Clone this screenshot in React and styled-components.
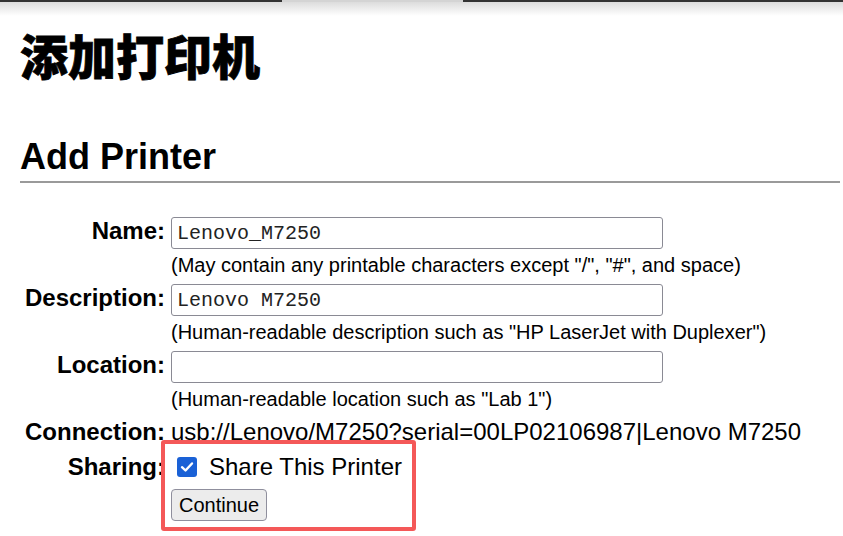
import React from "react";
import styled, { createGlobalStyle } from "styled-components";

const Global = createGlobalStyle`
  html, body { margin: 0; padding: 0; background: #fff; }
  body { font-family: "Liberation Sans", Arial, sans-serif; color: #000; }
`;

const Page = styled.div`
  position: relative;
  width: 843px;
  min-height: 536px;
`;

const TopBar = styled.div`
  display: flex;
  height: 2px;
`;

const Seg = styled.div`
  height: 2px;
  background: ${(p) => (p.$light ? "#d4d4d4" : "#333")};
  width: ${(p) => (p.$w ? `${p.$w}px` : "auto")};
  flex: ${(p) => (p.$w ? "none" : "1")};
`;

const Shade = styled.div`
  height: 14px;
  background: linear-gradient(#dcdcdc, #ffffff);
`;

const Content = styled.div`
  padding: 0 3px 0 20px;
`;

const Title = styled.h1`
  margin: 9px 0 0;
  font-family: "Noto Sans CJK SC", "Liberation Sans", sans-serif;
  font-size: 48px;
  font-weight: 900;
  line-height: 58px;
  -webkit-text-stroke: 0.8px #000;
`;

const SectionTitle = styled.h2`
  margin: 52px 0 0;
  padding-bottom: 3px;
  font-size: 36px;
  font-weight: 700;
  line-height: 43px;
  border-bottom: 2px solid #9a9a9a;
`;

const Form = styled.div`
  display: grid;
  grid-template-columns: 145px 1fr;
  column-gap: 6px;
  row-gap: 7px;
  margin-top: 34px;
`;

const Label = styled.div`
  font-size: 24px;
  font-weight: 700;
  line-height: 28px;
  text-align: right;
  white-space: nowrap;
`;

const Cell = styled.div`
  position: relative;
  display: flex;
  flex-direction: column;
  align-items: flex-start;
`;

const TextInput = styled.input`
  box-sizing: border-box;
  width: 492px;
  height: 32px;
  margin: 0;
  padding: 0 5px;
  border: 1px solid #8a8a94;
  border-radius: 3px;
  font-family: "Liberation Mono", "Courier New", monospace;
  font-size: 20px;
  color: #222;
  background: #fff;
  outline: none;
`;

const Help = styled.div`
  margin-top: 5px;
  font-size: 20px;
  line-height: 23px;
  white-space: nowrap;
`;

const Value = styled.div`
  font-size: 24px;
  line-height: 28px;
  white-space: nowrap;
`;

const CheckRow = styled.label`
  display: flex;
  align-items: center;
  height: 28px;
  font-size: 24px;
  gap: 12px;
  padding-left: 6px;
`;

const CheckBox = styled.span`
  display: inline-flex;
  align-items: center;
  justify-content: center;
  width: 20px;
  height: 20px;
  border-radius: 3px;
  background: #1a61d6;
`;

const Button = styled.button`
  box-sizing: border-box;
  margin-top: 8px;
  height: 32px;
  padding: 0 7px;
  font-family: "Liberation Sans", Arial, sans-serif;
  font-size: 20px;
  color: #000;
  background: #ececec;
  border: 1px solid #8f8f9d;
  border-radius: 4px;
`;

const Highlight = styled.div`
  position: absolute;
  left: -10px;
  top: -13px;
  width: 255px;
  height: 91px;
  box-sizing: border-box;
  border: 4px solid #f45858;
  border-radius: 3px;
  pointer-events: none;
`;

export default function App() {
  return (
    <>
      <Global />
      <Page>
        <TopBar>
          <Seg $w={282} />
          <Seg $w={181} $light />
          <Seg />
        </TopBar>
        <Shade />
        <Content>
          <Title>添加打印机</Title>
          <SectionTitle>Add Printer</SectionTitle>
          <Form>
            <Label>Name:</Label>
            <Cell>
              <TextInput defaultValue="Lenovo_M7250" />
              <Help>(May contain any printable characters except "/", "#", and space)</Help>
            </Cell>
            <Label>Description:</Label>
            <Cell>
              <TextInput defaultValue="Lenovo M7250" />
              <Help>(Human-readable description such as "HP LaserJet with Duplexer")</Help>
            </Cell>
            <Label>Location:</Label>
            <Cell>
              <TextInput defaultValue="" />
              <Help>(Human-readable location such as "Lab 1")</Help>
            </Cell>
            <Label>Connection:</Label>
            <Cell>
              <Value>usb://Lenovo/M7250?serial=00LP02106987|Lenovo M7250</Value>
            </Cell>
            <Label>Sharing:</Label>
            <Cell>
              <CheckRow>
                <CheckBox>
                  <svg width="16" height="16" viewBox="0 0 16 16">
                    <path d="M3 8.2 L6.5 11.5 L13 4.5" fill="none" stroke="#fff" strokeWidth="2.4" strokeLinecap="round" strokeLinejoin="round" />
                  </svg>
                </CheckBox>
                Share This Printer
              </CheckRow>
              <Button>Continue</Button>
              <Highlight />
            </Cell>
          </Form>
        </Content>
      </Page>
    </>
  );
}
